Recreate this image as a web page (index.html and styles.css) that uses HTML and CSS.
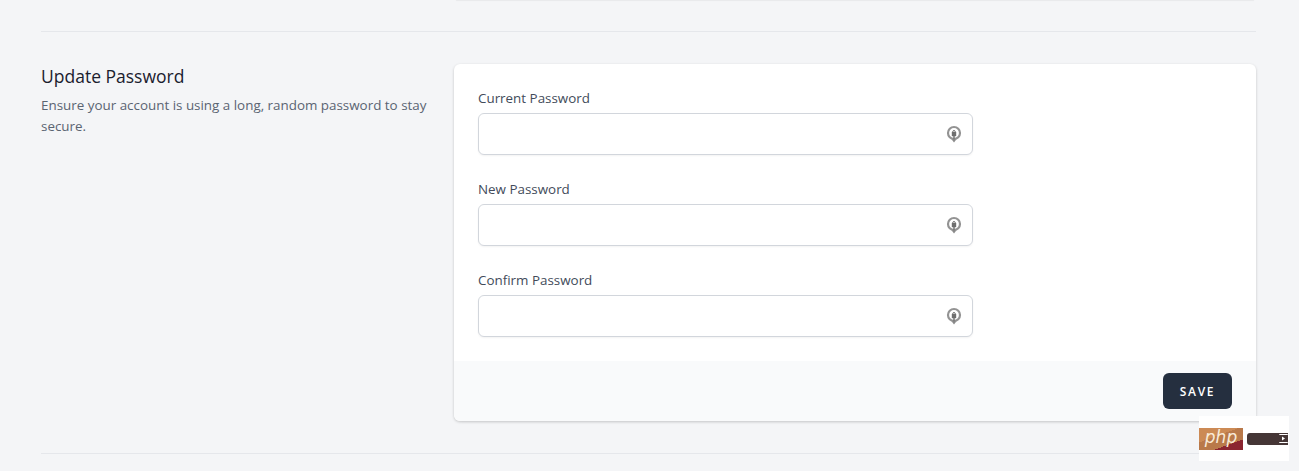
FILE: index.html
```html
<!DOCTYPE html>
<html lang="en">
<head>
  <meta charset="UTF-8" />
  <title>Update Password</title>
  <link rel="stylesheet" href="styles.css">
</head>
<body>

  <svg class="defs" width="0" height="0">
    <symbol id="key" viewBox="0 0 16 18">
      <circle cx="8" cy="8" r="6" fill="none" stroke="#939393" stroke-width="2.200"/>
      <rect x="5.800" y="7" width="4.400" height="4.200" fill="#6e6e6e"/>
      <path d="M6.700 7a1.300 1.500 0 0 1 2.600 0" fill="none" stroke="#6e6e6e" stroke-width="1"/>
      <path d="M8 11v5" stroke="#7a7a7a" stroke-width="1.600"/>
      <path d="M5.500 14.200h5L8 17.500z" fill="#8a8a8a"/>
    </symbol>
  </svg>

  <div class="page">
    <div class="prev-row">
      <div></div>
      <div class="prev-card"></div>
    </div>

    <div class="divider first"></div>

    <section class="row">
      <div class="intro">
        <h3>Update Password</h3>
        <p>Ensure your account is using a long, random password to stay secure.</p>
      </div>

      <form class="card">
        <div class="fields">
          <div class="field">
            <label for="current">Current Password</label>
            <div class="input-wrap">
              <input type="password" id="current" />
              <svg class="key-icon"><use href="#key"/></svg>
            </div>
          </div>
          <div class="field">
            <label for="newpass">New Password</label>
            <div class="input-wrap">
              <input type="password" id="newpass" />
              <svg class="key-icon"><use href="#key"/></svg>
            </div>
          </div>
          <div class="field">
            <label for="confirm">Confirm Password</label>
            <div class="input-wrap">
              <input type="password" id="confirm" />
              <svg class="key-icon"><use href="#key"/></svg>
            </div>
          </div>
        </div>
        <div class="card-footer">
          <button type="button">Save</button>
        </div>
      </form>
    </section>

    <div class="divider last"></div>
  </div>

  <div class="watermark">
    <div class="php-logo">php</div>
    <div class="php-bar">
      <svg class="php-play" viewBox="0 0 9 9"><path d="M0.500 1V0.500h8V1M0.500 8v0.500h8V8" fill="none" stroke="#fff" stroke-width="1"/><path d="M3 2.500l3 2-3 2z" fill="#fff"/></svg>
    </div>
  </div>

</body>
</html>
```

FILE: styles.css
```css
* {
  box-sizing: border-box;
}

html, body {
  height: 471px;
  overflow: hidden;
}

body {
  font-family: 'Open Sans', sans-serif;
  background: #f4f5f7;
  color: #1f2937;
  margin: 0;
  padding: 0;
}

.defs {
  position: absolute;
}

.page {
  padding: 0 43px 0 41px;
}

.prev-row, .row {
  display: grid;
  grid-template-columns: 389px 802px;
  gap: 24px;
}

.prev-card {
  height: 0;
  margin: 0 3px;
  box-shadow: 0 0 1px 1px rgba(0, 0, 0, 0.05);
}

.divider {
  border-top: 1px solid #e5e7eb;
}

.divider.first {
  margin-top: 31px;
}

.divider.last {
  margin-top: 32px;
}

.row {
  margin-top: 32px;
}

.intro h3 {
  margin: -2px 0 0;
  font-size: 17.500px;
  line-height: 28px;
  font-weight: 400;
  color: #1a202e;
}

.intro p {
  margin: 5px 0 0;
  font-size: 13.400px;
  line-height: 21px;
  color: #5a6472;
}

.card {
  background: #fff;
  border-radius: 6px;
  box-shadow: 0 1px 3px rgba(0, 0, 0, 0.2);
  overflow: hidden;
}

.fields {
  padding: 24px;
}

.field + .field {
  margin-top: 24px;
}

label {
  display: block;
  font-size: 13.400px;
  line-height: 20px;
  color: #424b5a;
}

.input-wrap {
  position: relative;
  width: 495px;
  margin-top: 5px;
}

input {
  display: block;
  width: 100%;
  height: 42px;
  border: 1px solid #d2d6dc;
  border-radius: 6px;
  background: #fff;
  box-shadow: 0 1px 2px rgba(0, 0, 0, 0.05);
}

.key-icon {
  position: absolute;
  right: 11px;
  top: 12px;
  width: 16px;
  height: 18px;
}

.card-footer {
  display: flex;
  justify-content: flex-end;
  align-items: center;
  height: 60px;
  padding: 0 24px;
  background: #f9fafb;
}

button {
  width: 69px;
  height: 36px;
  border: none;
  border-radius: 6px;
  background: #252f3f;
  color: #fff;
  font-family: 'Open Sans', sans-serif;
  font-size: 12px;
  font-weight: 600;
  letter-spacing: 1.700px;
  text-transform: uppercase;
}

.watermark {
  position: absolute;
  left: 1199px;
  top: 416px;
  width: 90px;
  height: 45px;
  background: #fff;
  display: flex;
  align-items: center;
  gap: 4px;
}

.php-logo {
  width: 44px;
  height: 22px;
  background: linear-gradient(160deg, #cc8a55 0 38%, #b9794a 38% 72%, #8b2530 72%);
  color: #f8ead8;
  font-family: 'DejaVu Sans', sans-serif;
  font-size: 17px;
  font-style: italic;
  line-height: 19px;
  text-align: center;
}

.php-bar {
  display: flex;
  justify-content: flex-end;
  align-items: center;
  width: 41px;
  height: 12px;
  border-radius: 3px 0 0 3px;
  background: #453636;
}

.php-play {
  width: 9px;
  height: 9px;
}
```
